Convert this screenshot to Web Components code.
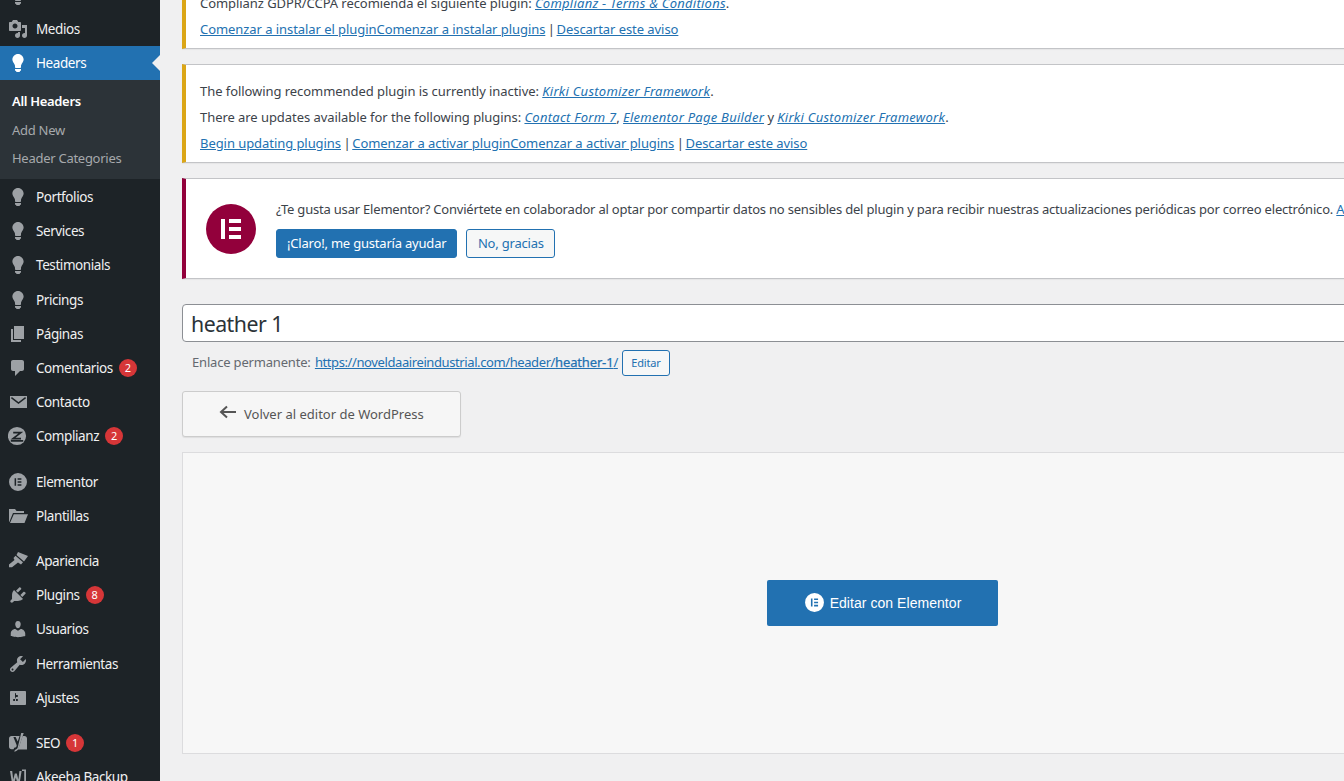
<!DOCTYPE html>
<html lang="es"><head><meta charset="utf-8"><title>heather 1</title>
<style>
html,body{margin:0;padding:0;height:781px;overflow:hidden;background:#f0f0f1}
body{font:13px/1.4 "Noto Sans","Open Sans",sans-serif;color:#3c434a;letter-spacing:-.2px}
a{color:#2271b1;text-decoration:underline}
a.i{font-style:italic;letter-spacing:.25px}
.s{letter-spacing:-.9px}
wp-permalink a{letter-spacing:-.4px}
wp-permalink b{font-weight:400;-webkit-text-stroke:.25px #2271b1;letter-spacing:-.15px}
</style></head><body>
<wp-shell>
  <wp-menu slot="side">
    <wp-menu-item icon="bulb"></wp-menu-item>
    <wp-menu-item icon="media" label="Medios" snug></wp-menu-item>
    <wp-menu-item icon="bulb" label="Headers" current snug></wp-menu-item>
    <wp-submenu><wp-sub-item strong>All Headers</wp-sub-item><wp-sub-item>Add New</wp-sub-item><wp-sub-item>Header Categories</wp-sub-item></wp-submenu>
    <wp-menu-item icon="bulb" label="Portfolios"></wp-menu-item>
    <wp-menu-item icon="bulb" label="Services"></wp-menu-item>
    <wp-menu-item icon="bulb" label="Testimonials" tall></wp-menu-item>
    <wp-menu-item icon="bulb" label="Pricings"></wp-menu-item>
    <wp-menu-item icon="page" label="Páginas"></wp-menu-item>
    <wp-menu-item icon="comment" label="Comentarios" badge="2"></wp-menu-item>
    <wp-menu-item icon="mail" label="Contacto"></wp-menu-item>
    <wp-menu-item icon="complianz" label="Complianz" badge="2"></wp-menu-item>
    <wp-menu-sep tall></wp-menu-sep>
    <wp-menu-item icon="elementor" label="Elementor"></wp-menu-item>
    <wp-menu-item icon="folder" label="Plantillas"></wp-menu-item>
    <wp-menu-sep></wp-menu-sep>
    <wp-menu-item icon="brush" label="Apariencia"></wp-menu-item>
    <wp-menu-item icon="plug" label="Plugins" badge="8"></wp-menu-item>
    <wp-menu-item icon="user" label="Usuarios" tall></wp-menu-item>
    <wp-menu-item icon="tools" label="Herramientas"></wp-menu-item>
    <wp-menu-item icon="settings" label="Ajustes"></wp-menu-item>
    <wp-menu-sep></wp-menu-sep>
    <wp-menu-item icon="yoast" label="SEO" badge="1"></wp-menu-item>
    <wp-menu-item icon="akeeba" label="Akeeba Backup"></wp-menu-item>
  </wp-menu>

  <wp-notice>
    <div>Complianz GDPR/CCPA recomienda el siguiente plugin: <a class="i" href="#">Complianz - Terms &amp; Conditions</a>.</div>
    <div><a href="#">Comenzar a instalar el pluginComenzar a instalar plugins</a><span class="s"> | </span><a href="#">Descartar este aviso</a></div>
  </wp-notice>
  <wp-notice>
    <div>The following recommended plugin is currently inactive: <a class="i" href="#">Kirki Customizer Framework</a>.</div>
    <div>There are updates available for the following plugins: <a class="i" href="#">Contact Form 7</a>, <a class="i" href="#">Elementor Page Builder</a> y <a class="i" href="#">Kirki Customizer Framework</a>.</div>
    <div><a href="#">Begin updating plugins</a><span class="s"> | </span><a href="#">Comenzar a activar pluginComenzar a activar plugins</a><span class="s"> | </span><a href="#">Descartar este aviso</a></div>
  </wp-notice>
  <wp-elementor-notice>
    ¿Te gusta usar Elementor? Conviértete en colaborador al optar por compartir datos no sensibles del plugin y para recibir nuestras actualizaciones periódicas por correo electrónico. <a href="#">Aprender más.</a>
    <wp-button slot="actions" primary>¡Claro!, me gustaría ayudar</wp-button>
    <wp-button slot="actions">No, gracias</wp-button>
  </wp-elementor-notice>
  <wp-title-field>heather 1</wp-title-field>
  <wp-permalink>
    <a href="#">https://noveldaaireindustrial.com/header/<b>heather-1</b>/</a>
  </wp-permalink>
  <wp-back-button>Volver al editor de WordPress</wp-back-button>
  <wp-editor-box>Editar con Elementor</wp-editor-box>
</wp-shell>

<script>
const ICONS = {
 bulb:'<path d="M10 1c3.11 0 5.63 2.52 5.63 5.62 0 1.84-2.03 4.58-2.03 4.58-.33.44-.6 1.25-.6 1.8v1c0 .55-.45 1-1 1H8c-.55 0-1-.45-1-1v-1c0-.55-.27-1.36-.6-1.8 0 0-2.02-2.74-2.02-4.58C4.38 3.52 6.89 1 10 1zM7 16.87V16h6v.87c0 .62-.13 1.13-.75 1.13H12c0 .62-.4 1-1.02 1h-2c-.61 0-.98-.38-.98-1h-.25c-.62 0-.75-.51-.75-1.13z"/>',
 media:'<path d="M13 11V4c0-.55-.45-1-1-1h-1.67L9 1H5L3.67 3H2c-.55 0-1 .45-1 1v7c0 .55.45 1 1 1h10c.55 0 1-.45 1-1zM7 4.5c1.38 0 2.5 1.12 2.5 2.5S8.38 9.5 7 9.5 4.5 8.38 4.5 7 5.62 4.5 7 4.5zM14 6h5v10.5c0 1.38-1.12 2.5-2.5 2.5S14 17.88 14 16.5s1.12-2.5 2.5-2.5c.17 0 .34.02.5.05V9h-3V6zm-4 8.05V13h2v3.5c0 1.38-1.12 2.5-2.5 2.5S7 17.88 7 16.5 8.12 14 9.5 14c.17 0 .34.02.5.05z"/>',
 page:'<path d="M6 15V2h10v13H6zm-1 1h8v2H3V5h2v11z"/>',
 comment:'<path d="M5 2h9c1.1 0 2 .9 2 2v7c0 1.1-.9 2-2 2h-2l-5 5v-5H5c-1.1 0-2-.9-2-2V4c0-1.1.9-2 2-2z"/>',
 mail:'<path d="M2 4h17v12H2z"/><path d="M3.4 5.6 10.5 11l7.1-5.4" fill="none" stroke="#1d2327" stroke-width="1.5"/>',
 complianz:'<circle cx="9" cy="10" r="9.1"/><path d="M5.2 6.6h7.6L5 12.6h8M2.8 14.9h12.4" fill="none" stroke="#1d2327" stroke-width="1.7"/>',
 elementor:'<path fill-rule="evenodd" d="M10 1a9 9 0 1 1 0 18 9 9 0 0 1 0-18zM6.6 6.2v7.6h1.5V6.2zm3 0v1.5h3.8V6.2zm0 3v1.5h3.8V9.2zm0 3v1.6h3.8v-1.6z"/>',
 folder:'<path d="M1 3h6l1.6 2H16v2H5L1.3 16H1zM5.8 8.2H20L16.5 17H2z"/>',
 brush:'<path d="M10 1 20 5 16 10.5 8.5 4zM7.5 4.8 15 11.2 13 13.5 10 11.5 4 16.3H1V13.5L6.5 9 5.5 7z"/>',
 plug:'<path d="M13.11 4.36L9.87 7.6 8 5.73l3.24-3.24c.35-.34 1.05-.2 1.56.32.52.51.66 1.21.31 1.55zm-8 1.77l.91-1.12 9.01 9.01-1.19.84c-.71.71-2.63 1.16-3.82 1.16H6.14L4.9 17.26c-.59.59-1.54.59-2.12 0-.59-.58-.59-1.53 0-2.12l1.24-1.24v-3.88c0-1.13.4-3.19 1.09-3.89zm7.26 3.97l3.24-3.24c.34-.35 1.04-.21 1.55.31.52.51.66 1.21.31 1.55l-3.24 3.25z"/>',
 user:'<path d="M10 9.25c-2.27 0-2.73-3.44-2.73-3.44C7 4.02 7.82 2 9.97 2c2.16 0 2.98 2.02 2.71 3.81 0 0-.41 3.44-2.68 3.44zm0 2.57L12.72 10c2.39 0 4.52 2.33 4.52 4.53v2.49s-3.65 1.13-7.24 1.13c-3.65 0-7.24-1.13-7.24-1.13v-2.49c0-2.25 1.94-4.48 4.47-4.48z"/>',
 tools:'<path d="M16.68 9.77c-1.34 1.34-3.3 1.67-4.95.99l-5.41 6.52c-.99.99-2.59.99-3.58 0s-.99-2.59 0-3.57l6.52-5.42c-.68-1.65-.35-3.61.99-4.95 1.28-1.28 3.12-1.62 4.72-1.06l-2.89 2.89 2.82 2.82 2.86-2.87c.53 1.58.18 3.39-1.08 4.67zM3.81 16.21c.4.39 1.04.39 1.43 0 .4-.4.4-1.04 0-1.43-.39-.4-1.03-.4-1.43 0-.39.39-.39 1.03 0 1.43z"/>',
 settings:'<path d="M18 16V4c0-.55-.45-1-1-1H3c-.55 0-1 .45-1 1v12c0 .55.45 1 1 1h14c.55 0 1-.45 1-1zM8 11h1c.55 0 1 .45 1 1s-.45 1-1 1H8v1.5c0 .28-.22.5-.5.5s-.5-.22-.5-.5V13H6c-.55 0-1-.45-1-1s.45-1 1-1h1V5.5c0-.28.22-.5.5-.5s.5.22.5.5V7h1c.55 0 1 .45 1 1s-.45 1-1 1h-1v5.5c0 .28-.22.5-.5.5s-.5-.22-.5-.5V9z"/>',
 yoast:'<path d="M3.5 3H11.6L9.7 8.6 7.6 3.9H5.4l3.2 8.1c.2.6.1 1.2-.3 1.7-.4.6-1.2 1-2.1 1.1l-.6 1.5H3.5C2.1 16.3 1 15.2 1 13.8V5.5C1 4.1 2.1 3 3.5 3zM12.6 3h3.9c1.4 0 2.5 1.1 2.5 2.5v11H8.6c1.2-.6 2-1.5 2.5-2.9L13.6 6l1-3.1h-2z"/><path d="M13.2 0h2.5L10.7 15c-.7 2-2.1 3.4-4.5 3.8l.7-1.9c1.3-.3 2.4-1 2.8-2.4z"/>',
 akeeba:'<path d="M2 4h2.2l1 8.6L6.8 6.5h2l1.6 6.1 1-8.6h2.2l-1.9 12H9.3L7.8 10.5 6.3 16H4zM14 2.5h4v14h-4v-1.6h2.2V4.1H14z"/>'
};
function def(name, css, html){
  customElements.define(name, class extends HTMLElement{
    connectedCallback(){
      if(this.shadowRoot) return;
      const r=this.attachShadow({mode:'open'});
      r.innerHTML='<style>'+css+'</style>'+(typeof html==='function'?html(this):html);
    }
  });
}
def('wp-shell',`
  :host{display:flex;height:781px;width:1344px;overflow:hidden;align-items:flex-start}
  .side{flex:0 0 160px;width:160px;height:781px;background:#1d2327;overflow:hidden}
  .main{flex:0 0 1401px;width:1401px;margin:-24px 0 0 22px;display:flex;flex-direction:column}
`,`<div class="side"><slot name="side"></slot></div><div class="main"><slot></slot></div>`);
def('wp-menu',`:host{display:block;margin-top:-22px}`,`<slot></slot>`);
def('wp-menu-sep',`:host{display:block;height:11px} :host([tall]){height:12px}`,``);
def('wp-menu-item',`
  :host{display:flex;align-items:center;box-sizing:border-box;height:34px;padding-top:2px;color:#f0f0f1;font-size:13.5px;letter-spacing:-.42px;position:relative}
  :host([snug]){padding-top:0}
  :host([tall]){height:35px;padding-bottom:1px}
  :host([current]){background:#2271b1;color:#fff}
  svg{width:20px;height:20px;margin:0 8px;fill:#9da1a5;flex:none}
  :host([current]) svg{fill:#fff}
  .b{display:inline-flex;align-items:center;justify-content:center;width:18px;height:18px;border-radius:50%;background:#d63638;color:#fff;font-size:11px;margin-left:6px;letter-spacing:0}
  .a{position:absolute;right:0;top:50%;margin-top:-8px;border:8px solid transparent;border-left:0;border-right-color:#f0f0f1}
`,h=>`<svg viewBox="0 0 20 20">${ICONS[h.getAttribute('icon')]||''}</svg><span>${h.getAttribute('label')||''}</span>`+
  (h.hasAttribute('badge')?`<span class="b">${h.getAttribute('badge')}</span>`:'')+
  (h.hasAttribute('current')?'<span class="a"></span>':''));
def('wp-submenu',`:host{display:block;background:#2c3338;padding:7px 0}`,`<slot></slot>`);
def('wp-sub-item',`
  :host{display:flex;align-items:center;height:28px;padding-left:12px;color:#a6a9ac;font-size:13px;letter-spacing:-.27px}
  :host([strong]){color:#fff;font-weight:600;letter-spacing:-.32px;margin-bottom:1px}
`,`<slot></slot>`);
def('wp-notice',`
  :host{display:block;background:#fff;border:1px solid #c3c4c7;border-left:4px solid #dba617;box-shadow:0 1px 1px rgba(0,0,0,.04);padding:13px 12px 6px 14px;margin-bottom:15px;line-height:26px;white-space:nowrap;overflow:hidden;letter-spacing:-.06px}
`,`<slot></slot>`);
def('wp-elementor-notice',`
  :host{display:flex;align-items:center;gap:20px;background:#fff;border:1px solid #c3c4c7;border-left:4px solid #92003b;box-shadow:0 1px 1px rgba(0,0,0,.04);height:99px;padding-left:20px;margin-bottom:25px;white-space:nowrap;overflow:hidden}
  svg{width:50px;height:50px;flex:none}
  .t{line-height:18px;margin-bottom:11px}
  .b{display:flex;gap:9px}
`,`<svg viewBox="0 0 50 50"><circle cx="25" cy="25" r="25" fill="#92003b"/><path fill="#fff" d="M15 15h4v20h-4zM23 15h12v4H23zM23 23h12v4H23zM23 31h12v4H23z"/></svg>
   <div><div class="t"><slot></slot></div><div class="b"><slot name="actions"></slot></div></div>`);
def('wp-button',`
  :host{display:inline-flex;align-items:center;box-sizing:content-box;height:26px;padding:1px 10.5px 0;border:1px solid #2271b1;border-radius:3px;background:#f6f7f7;color:#2271b1;font-size:13px;white-space:nowrap}
  :host([primary]){background:#2271b1;color:#fff;padding:1px 10px 0}
`,`<slot></slot>`);
def('wp-title-field',`
  :host{display:flex;align-items:center;box-sizing:border-box;height:38px;background:#fff;border:1px solid #8c8f94;border-radius:4px;padding:2px 8px 0;font-size:21.3px;letter-spacing:-.5px;color:#2c3338}
`,`<slot></slot>`);
def('wp-permalink',`
  :host{display:flex;align-items:center;height:26px;margin-top:8px;padding-left:10px;color:#646970;white-space:nowrap}
  .t{margin-top:-2px}
  .b{display:inline-flex;align-items:center;box-sizing:border-box;height:26px;padding:0 8.5px;margin-left:4px;border:1px solid #2271b1;border-radius:3px;background:#f6f7f7;color:#2271b1;font-size:11px}
  .l{margin-right:1px;letter-spacing:-.18px}
`,`<span class="t"><span class="l">Enlace permanente:</span><slot></slot></span><span class="b">Editar</span>`);
def('wp-back-button',`
  :host{display:flex;align-items:center;box-sizing:border-box;width:279px;height:46px;margin-top:15px;background:#f6f6f6;border:1px solid #ccc;border-radius:3px;box-shadow:0 1px 1px rgba(0,0,0,.08);padding-left:36px;color:#555;font-size:13px;letter-spacing:0}
  svg{width:18px;height:14px;margin-right:7px;fill:none;stroke:#555;stroke-width:2;flex:none;position:relative;top:-2px}
`,`<svg viewBox="0 0 18 14"><path d="M17 7H2M8 1.5 2 7l6 5.5"/></svg><slot></slot>`);
def('wp-editor-box',`
  :host{display:flex;align-items:center;justify-content:center;box-sizing:border-box;height:302px;margin-top:15px;background:#f7f7f7;border:1px solid #dcdcde}
  .b{display:flex;align-items:center;justify-content:center;width:231px;height:46px;background:#2271b1;border-radius:2px;color:#fff;font:14px "Liberation Sans",Arial,sans-serif;letter-spacing:.05px}
  svg{width:21px;height:21px;margin-right:5px;position:relative;top:-1px}
`,`<div class="b"><svg viewBox="0 0 20 20"><path fill="#fff" fill-rule="evenodd" d="M10 1a9 9 0 1 1 0 18 9 9 0 0 1 0-18zM6.6 6.2v7.6h1.5V6.2zm3 0v1.5h3.8V6.2zm0 3v1.5h3.8V9.2zm0 3v1.6h3.8v-1.6z"/></svg><slot></slot></div>`);
</script>
</body></html>
